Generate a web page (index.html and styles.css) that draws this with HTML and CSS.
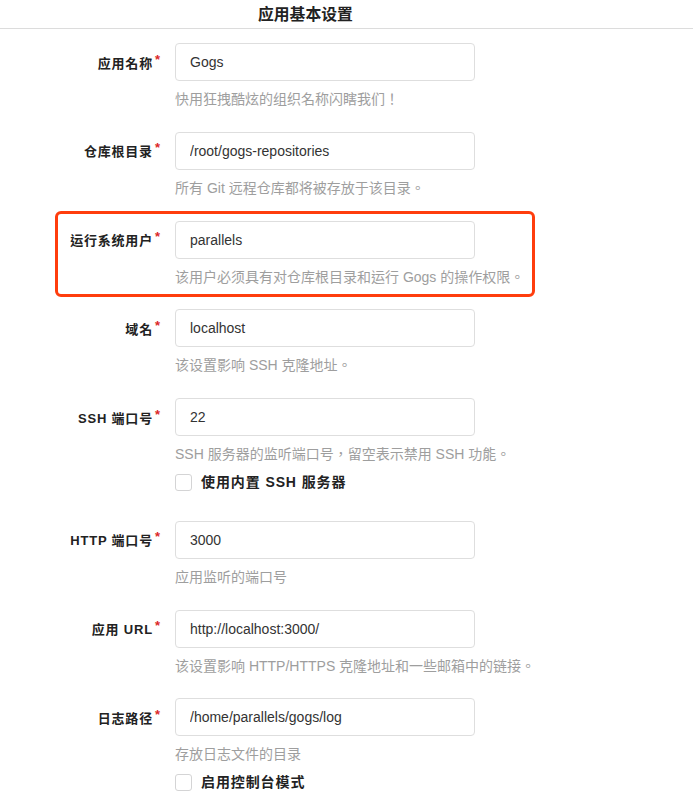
FILE: index.html
```html
<!DOCTYPE html>
<html>
<head>
<meta charset="utf-8">
<title>应用基本设置</title>
<link rel="stylesheet" href="styles.css">
</head>
<body>
<div class="page">
  <h4 class="section-header"><span class="section-title">应用基本设置</span></h4>
  <form class="form">
    <div class="field">
      <label class="field-label">应用名称</label>
      <input class="text-input" type="text" value="Gogs">
      <span class="help">快用狂拽酷炫的组织名称闪瞎我们！</span>
    </div>
    <div class="field">
      <label class="field-label">仓库根目录</label>
      <input class="text-input" type="text" value="/root/gogs-repositories">
      <span class="help">所有 Git 远程仓库都将被存放于该目录。</span>
    </div>
    <div class="field highlighted">
      <label class="field-label">运行系统用户</label>
      <input class="text-input" type="text" value="parallels">
      <span class="help">该用户必须具有对仓库根目录和运行 Gogs 的操作权限。</span>
      <div class="annotation-box"></div>
    </div>
    <div class="field">
      <label class="field-label">域名</label>
      <input class="text-input" type="text" value="localhost">
      <span class="help">该设置影响 SSH 克隆地址。</span>
    </div>
    <div class="field field-with-check">
      <label class="field-label">SSH 端口号</label>
      <input class="text-input" type="text" value="22">
      <span class="help">SSH 服务器的监听端口号，留空表示禁用 SSH 功能。</span>
      <label class="check"><span class="check-box"></span><span class="check-label">使用内置 SSH 服务器</span></label>
    </div>
    <div class="field">
      <label class="field-label">HTTP 端口号</label>
      <input class="text-input" type="text" value="3000">
      <span class="help">应用监听的端口号</span>
    </div>
    <div class="field">
      <label class="field-label">应用 URL</label>
      <input class="text-input" type="text" value="http://localhost:3000/">
      <span class="help">该设置影响 HTTP/HTTPS 克隆地址和一些邮箱中的链接。</span>
    </div>
    <div class="field">
      <label class="field-label">日志路径</label>
      <input class="text-input" type="text" value="/home/parallels/gogs/log">
      <span class="help">存放日志文件的目录</span>
      <label class="check"><span class="check-box"></span><span class="check-label">启用控制台模式</span></label>
    </div>
  </form>
</div>
</body>
</html>
```

FILE: styles.css
```css
html, body {
  margin: 0;
  padding: 0;
  background: #ffffff;
}

body {
  font-family: "Liberation Sans", Arial, "Noto Sans CJK TC", sans-serif;
  font-size: 14px;
  color: rgba(0, 0, 0, 0.87);
  overflow: hidden;
}

.page {
  width: 693px;
}

.section-header {
  margin: 0;
  padding: 5px 0 3px 258px;
  line-height: 20px;
  font-size: 15.8px;
  font-weight: bold;
  color: #222;
  border-bottom: 1px solid #dcdcdc;
}

.form {
  display: flex;
  flex-direction: column;
  padding-top: 14px;
}

.field {
  position: relative;
  display: grid;
  grid-template-columns: 160px 300px;
  column-gap: 15px;
  align-items: center;
  margin-bottom: 22.75px;
}

.field-label {
  grid-column: 1;
  grid-row: 1;
  text-align: right;
  font-size: 13px;
  letter-spacing: 0.8px;
  font-weight: bold;
  color: #222;
}

.field-label::after {
  content: "*";
  color: #db2828;
  position: relative;
  top: -4px;
  margin-left: 2px;
  font-size: 13px;
  letter-spacing: 0;
}

.text-input {
  grid-column: 2;
  grid-row: 1;
  box-sizing: border-box;
  width: 300px;
  height: 38px;
  margin: 0;
  padding: 0 14px;
  font-family: inherit;
  font-size: 14px;
  color: #333;
  background: #fff;
  border: 1px solid #dedede;
  border-radius: 4px;
  outline: none;
}

.help {
  grid-column: 2 / span 2;
  grid-row: 2;
  margin-top: 8px;
  line-height: 20px;
  font-size: 14px;
  color: #9e9e9e;
  white-space: nowrap;
}

.check {
  grid-column: 2 / span 2;
  grid-row: 3;
  display: flex;
  align-items: center;
  gap: 9px;
  margin-top: 8px;
  line-height: 20px;
}

.field-with-check .check {
  margin-bottom: 6px;
}

.check-box {
  box-sizing: border-box;
  width: 17px;
  height: 17px;
  border: 1px solid #d4d4d5;
  border-radius: 3px;
  background: #fff;
}

.check-label {
  font-size: 14px;
  letter-spacing: 0.9px;
  font-weight: bold;
  color: #222;
}

.annotation-box {
  position: absolute;
  left: 55px;
  top: -10px;
  width: 480px;
  height: 86px;
  box-sizing: border-box;
  border: 3px solid #ff3d0d;
  border-radius: 6px;
  pointer-events: none;
}
```
